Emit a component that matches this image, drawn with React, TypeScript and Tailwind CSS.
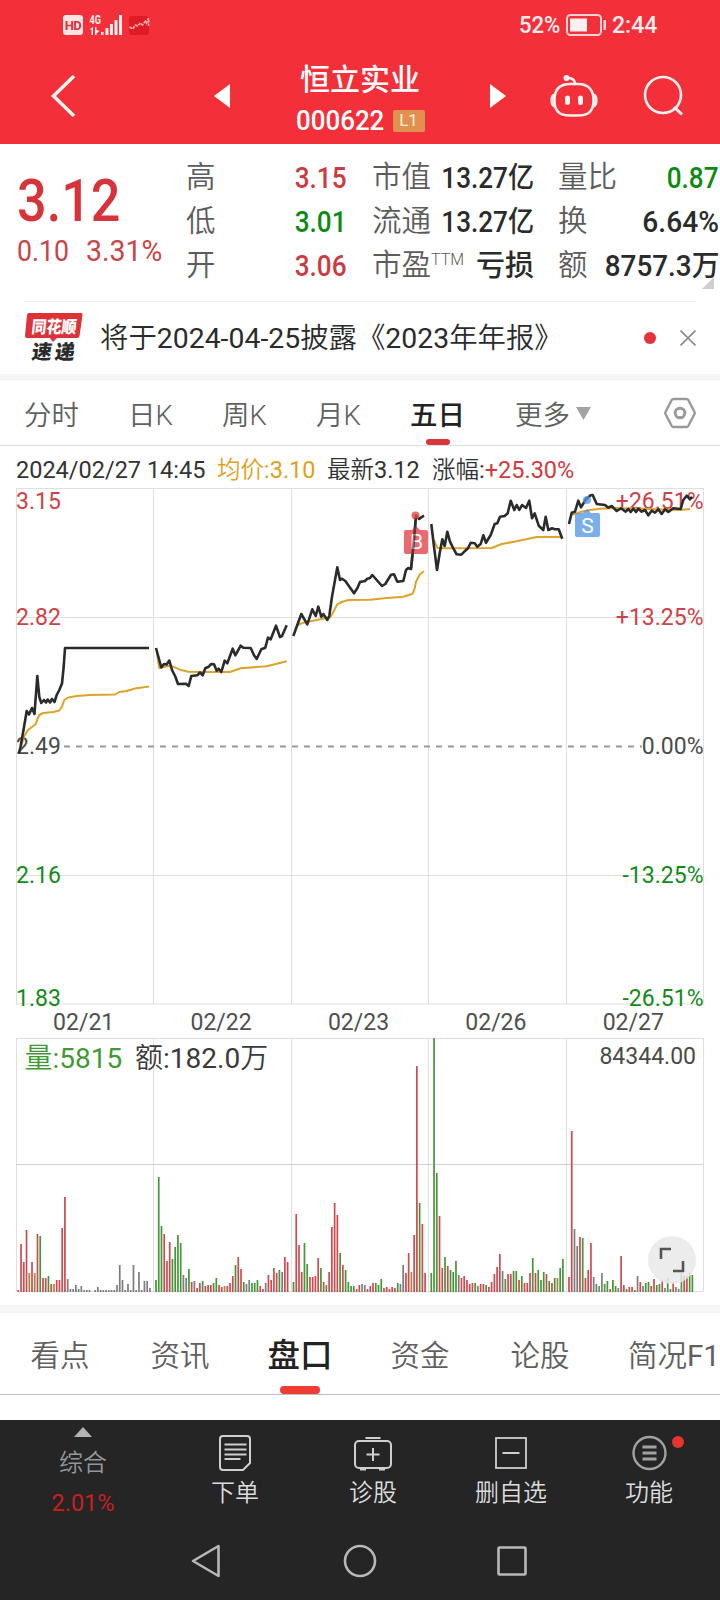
import React from 'react';

type Point = [number, number];

interface DaySeries {
  date: string;
  startX: number;
  price: Point[];
  average: Point[];
  // one entry per bar: colour key followed by the height
  volume: string;
}

const DAYS: DaySeries[] = [
  {
    date: '02/21',
    startX: 18.3,
    price: [
      [19, 265], [20.5, 259], [24, 239], [26.7, 223], [29, 226.5], [32, 220], [34.5, 226], [37.3, 188], [39.3, 209],
      [41.3, 215], [44, 212], [46, 214.5], [47.7, 211.5], [50, 214.5], [52, 211], [54.5, 214], [56.7, 207],
      [59.3, 202], [62, 195.5], [63.7, 178.5], [65, 160], [149, 160],
    ],
    average: [
      [20, 262], [24, 248.5], [28, 242], [35.3, 236.5], [39.3, 227], [43.3, 225], [53.3, 224], [59.3, 222.5],
      [62, 218.5], [64.3, 212], [68.3, 209.5], [76.7, 208], [90, 207], [115, 206.5], [119.3, 204], [126.7, 203],
      [135, 200.5], [149, 198.5],
    ],
    volume:
      'r2 r48 r30 r62 o19 r30 o19 r58 g56 r14 r14 g16 r8 o8 r12 r12 r64 r95 k13 k3 k3 k7 k3 k6 k2 k2 k2 k0 k2 k5 k2 k2 k2 k2 k2 k2 k7 k27 k12 k2 k8 k2 k27 k2 k20 k2 k11 k11 k4',
  },
  {
    date: '02/22',
    startX: 156,
    price: [
      [156, 160], [158.3, 168.5], [161.3, 179.5], [164, 176], [166.7, 176.5], [169.3, 172.5], [172, 182],
      [175.3, 188.5], [178, 196], [186, 195.7], [188.7, 198], [191.3, 188], [197.3, 187.3], [200, 184.5],
      [202.7, 187.3], [205.3, 180.3], [208.7, 178.7], [211.3, 176], [214, 176.3], [216.7, 182.7], [218.7, 180.7],
      [221.3, 184], [224.7, 172.7], [227.3, 175.3], [232.7, 160.7], [235.3, 167.3], [240.7, 157.7], [243.3, 159.7],
      [250.7, 160], [254, 167.3], [256.7, 171], [261.3, 161.3], [265.3, 159.7], [268, 149.7], [270.7, 151.3],
      [276, 137.7], [280, 149], [282, 148], [286.7, 137.3],
    ],
    average: [
      [156.7, 163.7], [159.3, 180], [162, 179.3], [170.7, 177.7], [180, 181.7], [188.3, 183.7], [200, 184],
      [230, 184], [240.7, 180.3], [266.7, 178.3], [286.7, 173.3],
    ],
    volume:
      'g12 g115 g66 r58 r31 r50 g33 g45 g57 g49 k17 k14 g23 r10 k11 r4 r9 g11 r6 r7 r7 g9 g14 r7 r5 o6 r6 r9 r16 g27 r35 r23 g10 k8 k12 g9 g9 g12 r6 r3 k9 r17 r12 r24 r19 g22 k20 r35 r30',
  },
  {
    date: '02/23',
    startX: 293.5,
    price: [
      [293.3, 148], [301.3, 126], [307.3, 136.3], [312.3, 121.3], [315.7, 128], [318.3, 118.7], [321.3, 128.7],
      [323.3, 126], [327.3, 132], [329.3, 128], [332, 108.7], [337.3, 79.3], [340, 92], [342, 90.7], [345.3, 93],
      [354, 105.3], [357.3, 100.3], [360, 94], [365, 93], [367.3, 90.7], [370, 90], [372.3, 87], [382, 98],
      [385.3, 96], [391, 86.7], [394, 86.3], [397.3, 93.7], [403.3, 93], [406, 82], [408.3, 80], [411, 81],
      [413.3, 58.7], [416, 27.7], [419.3, 31], [421.3, 29.3], [424, 27.7],
    ],
    average: [
      [297.3, 137], [303.3, 134.7], [311.7, 133], [325, 130.3], [330, 129.3], [332.7, 125.3], [337.3, 116.3],
      [341.7, 114], [348.3, 112], [370, 111.7], [386.7, 110], [403.3, 108.7], [412.7, 105.7], [414.7, 100.3],
      [416, 93.7], [420, 86.3], [424, 83.3],
    ],
    volume:
      'g10 r78 r47 r20 g49 g28 r15 r15 r16 r34 g24 r10 g7 r20 r65 r89 r77 g39 r27 g22 g10 g6 g6 r3 r7 k8 k7 r3 r6 r9 g9 g7 g13 r4 r5 r3 r5 r4 g9 k8 k27 r19 r39 o20 r57 r226 g89 r68 r19',
  },
  {
    date: '02/26',
    startX: 431.3,
    price: [
      [431.3, 36], [434, 58.7], [437, 82], [439.7, 65.3], [442.3, 51.3], [444.7, 58], [447.3, 43.7], [450, 53.7],
      [453.3, 60.3], [456.7, 66.3], [461.3, 66.7], [465.3, 62.7], [468, 60.3], [470.7, 54.7], [474.7, 55.3],
      [477.3, 58.7], [480.7, 56], [483.3, 47.3], [486, 54.7], [490.7, 47], [494.7, 36], [497.3, 35.3], [500, 28.7],
      [504.7, 28], [507.7, 25.3], [510.7, 12.7], [514.3, 22], [516.7, 17], [519.3, 22], [522, 17], [526, 20],
      [529.3, 12.7], [532, 30.3], [534.7, 25.3], [538.7, 37.7], [543.3, 42], [545.7, 28.7], [548.3, 42], [552, 40.3],
      [554.7, 41.3], [558.7, 41.3], [562.3, 50.7],
    ],
    average: [
      [434, 52], [437.3, 59.7], [443, 60.3], [491.7, 60], [501.7, 56], [516.7, 53.3], [536.7, 49], [561.7, 49],
    ],
    volume:
      'g19 g254 g119 r76 r24 g35 r26 g22 g20 g31 k17 r14 r16 r12 r8 r9 g9 k6 r8 r8 g7 r5 r10 r18 r25 r38 k21 g13 r18 r18 g21 g21 r12 g16 r9 r9 r19 g34 r19 g22 g12 g20 r18 g11 r9 g14 o14 g24 g33',
  },
  {
    date: '02/27',
    startX: 569,
    price: [
      [569, 36], [571.7, 24.7], [575, 23.7], [578.3, 12.7], [581, 19.3], [586, 11.3], [590.7, 7.3], [592.7, 7],
      [596.7, 16], [605, 17], [608.3, 19.7], [611.7, 18], [616.7, 23], [621, 20.3], [625.7, 23.7], [628.3, 21],
      [630.7, 24], [633.3, 20.7], [636, 24], [638.3, 20.7], [641.7, 23.7], [645, 22], [648.3, 27.3], [651.7, 22.7],
      [655, 24.7], [658.3, 21.3], [661.7, 26], [665, 21.3], [668.3, 24], [673.3, 20.3], [680.7, 21], [683.3, 12],
      [686.7, 7.7], [690, 11.3], [692, 8.7],
    ],
    average: [
      [570.7, 27], [576.7, 25.3], [581.7, 23.7], [590, 22], [600, 20.7], [613.3, 20], [643, 20.7], [680, 22],
      [690, 21],
    ],
    volume:
      'r15 r161 k63 k46 r55 g54 r14 r22 r49 k15 g8 k6 k19 g8 g11 r3 g12 g6 k4 r36 r7 g3 r5 r5 g2 k16 r10 k6 g9 g10 r6 r13 g7 g8 r12 k4 g14 g3 r10 k5 k3 g19 r16 r16 g19 g17',
  },
];

const BAR_COLORS: Record<string, string> = {
  r: '#cf4a50',
  g: '#459638',
  k: '#7d7d7d',
  o: '#a8873c',
};

const BAR_STEP = 2.742;
const GRID_X = [153.5, 291.5, 428.5, 566.5];

const toPoints = (points: Point[]) => points.map((p) => p.join(',')).join(' ');

const StatusBar = () => (
  <div className="flex h-12 items-center justify-between pl-[63px] pr-[63px] text-[#ffecec]">
    <div className="flex items-center pt-[2px]">
      <span className="flex h-5 w-5 items-center justify-center rounded-[3px] bg-[#ffe4e4] text-[#dd2f39]">
        <span className="text-[13px] font-bold leading-none tracking-[-0.5px]">HD</span>
      </span>
      <svg width="34" height="22" viewBox="0 0 34 22" className="ml-[6px]" fill="currentColor">
        <text x="0.5" y="9.5" fontSize="12" fontWeight="700" textLength="11.5" lengthAdjust="spacingAndGlyphs">4G</text>
        <path d="M1 15l3-2v8H2.500v-5.500H1zM6 13h1.500v3l3 1-3 2.500V21H6z" />
        <rect x="12" y="18" width="2.500" height="3" />
        <rect x="16.500" y="14" width="3" height="7" />
        <rect x="21" y="10" width="3" height="11" />
        <rect x="25.500" y="6" width="3" height="15" />
        <rect x="30" y="1" width="3" height="20" />
      </svg>
      <svg width="21" height="21" viewBox="0 0 21 21" className="ml-[6px]">
        <rect y="1" width="20" height="19" rx="3" fill="#e01a26" />
        <path
          d="M0.500 12l3 2 3-4 2 1 3-3 2 2 3-4 1 2 2-5v8"
          fill="none"
          stroke="#ffb9b4"
          strokeWidth="1.600"
          strokeDasharray="3 1"
        />
      </svg>
    </div>
    <div className="flex items-center pt-[2px] text-[24px] font-medium leading-none">
      <span className="w-[43px] origin-left scale-x-[.92]">52%</span>
      <svg width="42" height="22" viewBox="0 0 42 22" className="ml-[4px] mr-[4px]">
        <rect x="1" y="1" width="34" height="20" rx="3.500" fill="none" stroke="#ffd3d5" strokeWidth="2" />
        <rect x="4" y="4.500" width="17" height="13" fill="#fff0f0" />
        <rect x="37.500" y="6" width="2.500" height="10" fill="#ffd3d5" />
      </svg>
      <span className="w-[45px] origin-left scale-x-[.96]">2:44</span>
    </div>
  </div>
);

const TitleBar = () => (
  <div className="flex h-24 items-center text-white">
    <svg width="26" height="44" viewBox="0 0 26 44" className="ml-[50px] shrink-0" fill="none" stroke="#fff3f0" strokeWidth="3.500">
      <path d="M24 2L3.500 22 24 42" />
    </svg>
    <svg width="16" height="24" viewBox="0 0 16 24" className="ml-[138px] shrink-0">
      <path d="M0 12L16 0v24z" fill="#fff" />
    </svg>
    <div className="ml-[58px] flex w-[144px] shrink-0 flex-col items-center pt-[8px]">
      <h1 className="text-[30px] font-medium leading-[38px]">恒立实业</h1>
      <div className="mt-[3px] flex items-center">
        <span className="w-[89px] origin-left scale-x-[.925] whitespace-nowrap text-[28px] font-medium leading-[38px]">
          000622
        </span>
        <span className="ml-[8px] flex h-[22px] w-8 items-center justify-center rounded-[2px] bg-[#e0914f] text-[17px] leading-none text-[#fff0dc]">
          L1
        </span>
      </div>
    </div>
    <svg width="16" height="24" viewBox="0 0 16 24" className="ml-[58px] shrink-0">
      <path d="M16 12L0 0v24z" fill="#fff" />
    </svg>
    <svg width="48" height="44" viewBox="0 0 48 44" className="ml-[44px] shrink-0" fill="none" stroke="#fff1ef" strokeWidth="2.600">
      <path d="M20 10h8c10 0 15.500 5.500 15.500 16 0 11-4.500 15.500-15.500 15.500h-8C9 41.500 4.500 37 4.500 26 4.500 15.500 10 10 20 10z" />
      <path d="M4.500 21c-3.500 1-3.500 10 0 11M43.500 21c3.500 1 3.500 10 0 11" strokeWidth="3" />
      <path d="M25 10c0-4-2-5.500-6-6" strokeLinecap="round" />
      <circle cx="16.500" cy="4" r="3" fill="#fff1ef" stroke="none" />
      <path d="M17.500 24v4.500M30.500 24v4.500" strokeWidth="5" strokeLinecap="round" />
    </svg>
    <svg width="42" height="42" viewBox="0 0 42 42" className="ml-[45px] shrink-0" fill="none" stroke="#fff1ef" strokeWidth="2.600">
      <circle cx="20" cy="20" r="18" />
      <path d="M31 32l8 7.500" strokeWidth="3" />
    </svg>
  </div>
);

interface QuoteCellProps {
  label: React.ReactNode;
  value: string;
  color?: string;
  scale?: string;
}

const QuoteCell: React.FC<QuoteCellProps> = ({ label, value, color = 'text-[#2b2b2b]', scale = 'scale-x-[.9]' }) => (
  <div className="flex h-11 items-center justify-between whitespace-nowrap">
    <span className="text-[29.500px] font-[350] leading-none text-[#5c5c5c]">{label}</span>
    <span className={`w-0 text-[29px] font-medium leading-none ${color}`}>
      <span className={`float-right origin-right ${scale}`}>{value}</span>
    </span>
  </div>
);

const QuotePanel = () => (
  <section className="flex h-[157px] pt-[12px]">
    <div className="w-[186px] shrink-0 pl-[17px] text-[#d6343a]">
      <div className="mt-[13px] w-0 origin-left scale-x-[.87] text-[60px] font-medium leading-[64px]">3.12</div>
      <div className="-mt-[1px] flex text-[29px] leading-[38px] text-[#c94449]">
        <span className="w-[69px] origin-left scale-x-[.92]">0.10</span>
        <span className="w-0 origin-left scale-x-[.98]">3.31%</span>
      </div>
    </div>
    <div className="w-[161px] shrink-0">
      <QuoteCell label="高" value="3.15" color="text-[#cc3b42]" />
      <QuoteCell label="低" value="3.01" color="text-[#0c8a12]" />
      <QuoteCell label="开" value="3.06" color="text-[#cc3b42]" />
    </div>
    <div className="ml-[25px] w-[162px] shrink-0">
      <QuoteCell label="市值" value="13.27亿" />
      <QuoteCell label="流通" value="13.27亿" />
      <QuoteCell
        label={
          <>
            市盈<sup className="relative -top-[10px] text-[16px] font-[350] leading-none">TTM</sup>
          </>
        }
        value="亏损"
        scale="scale-x-100"
      />
    </div>
    <div className="relative ml-[24px] w-[161px] shrink-0">
      <QuoteCell label="量比" value="0.87" color="text-[#0c8a12]" />
      <QuoteCell label="换" value="6.64%" scale="scale-x-[.97]" />
      <QuoteCell label="额" value="8757.3万" scale="scale-x-[.96]" />
      <svg width="12" height="12" viewBox="0 0 12 12" className="absolute bottom-[12px] right-[5px]">
        <path d="M12 0v12H0z" fill="#cfcfcf" />
      </svg>
    </div>
  </section>
);

const NoticeBar = () => (
  <section className="mx-6 flex h-[73px] items-center border-t border-[#ececec]">
    <svg width="59" height="52" viewBox="0 0 59 52" className="shrink-0 overflow-visible">
      <path d="M5 1h52q2 0 1.500 2l-3 21q-.5 2-2.500 2H33l-4 4-3-4H3q-2 0-2-2L3 3q.3-2 2-2z" fill="#dc3238" />
      <text x="0" y="0" transform="translate(7 20.500) skewX(-6)" fontSize="17" fontWeight="900" fill="#fff" textLength="45" lengthAdjust="spacingAndGlyphs">
        同花顺
      </text>
      <text x="0" y="0" transform="translate(7 47) skewX(-8)" fontSize="20" fontWeight="900" fill="#2a2a2a" textLength="43">
        速递
      </text>
    </svg>
    <p className="ml-[17px] grow whitespace-nowrap pt-[2px] text-[28.400px] font-[350] leading-none text-[#2b2b2b]">
      将于<span className="font-normal">2024-04-25</span>披露《<span className="font-normal">2023</span>年年报》
    </p>
    <span className="mr-6 h-3 w-3 rounded-full bg-[#e8323a]" />
    <svg width="16" height="16" viewBox="0 0 16 16" fill="none" stroke="#8a8a8a" strokeWidth="1.600">
      <path d="M.5.5l15 15M15.500.5l-15 15" />
    </svg>
  </section>
);

const PERIODS = ['分时', '日K', '周K', '月K', '五日'];

const PeriodTabs = () => (
  <nav className="flex h-[65px] items-center justify-between border-b border-[#dedede] pl-[24px] pr-6 text-[27.500px] font-[350] leading-none text-[#606060]">
    <div className="flex h-full items-center gap-[50px]">
      {PERIODS.map((period) =>
        period === '五日' ? (
          <div key={period} className="relative flex h-full items-center pt-[5px] font-medium text-[#222]">
            {period}
            <span className="absolute bottom-0 left-1/2 h-[6px] w-6 -translate-x-1/2 rounded-full bg-[#d9363c]" />
          </div>
        ) : (
          <div key={period} className="w-[44px] whitespace-nowrap pt-[5px] first:w-[54px]">{period}</div>
        )
      )}
      <div className="flex items-center gap-[6px] whitespace-nowrap pt-[5px]">
        更多
        <svg width="15" height="13" viewBox="0 0 15 13" className="mb-[4px]">
          <path d="M0 0h15L7.500 13z" fill="#a3a3a3" />
        </svg>
      </div>
    </div>
    <svg width="32" height="32" viewBox="0 0 32 32" fill="none" stroke="#999" strokeWidth="2.400">
      <path d="M9.500 2h13q1.200 0 1.800 1L30.500 15q.5 1 0 2L24.300 29q-.6 1-1.800 1h-13q-1.200 0-1.800-1L1.500 17q-.5-1 0-2L7.700 3q.6-1 1.800-1z" />
      <circle cx="16" cy="16" r="4.800" strokeWidth="3" />
    </svg>
  </nav>
);

const PriceInfo = () => (
  <div className="flex h-[42px] items-center whitespace-nowrap pl-4 pt-[7px] text-[23.500px] leading-none text-[#333]">
    <span className="w-[201px]">2024/02/27 14:45</span>
    <span className="w-[110px] text-[#dda21c]">
      <span className="font-[350]">均价</span>:3.10
    </span>
    <span className="w-[105px]">
      <span className="font-[350]">最新</span>3.12
    </span>
    <span>
      <span className="font-[350]">涨幅</span>:<span className="text-[#d23a40]">+25.30%</span>
    </span>
  </div>
);

const PRICE_LABELS = [
  { y: 20.5, price: '3.15', percent: '+26.51%', color: '#cf4047' },
  { y: 137, price: '2.82', percent: '+13.25%', color: '#cf4047' },
  { y: 266, price: '2.49', percent: '0.00%', color: '#4b4b4b' },
  { y: 395, price: '2.16', percent: '-13.25%', color: '#148a1b' },
  { y: 517.5, price: '1.83', percent: '-26.51%', color: '#148a1b' },
];

const PriceChart = () => (
  <svg width="720" height="516" viewBox="0 0 720 516" className="block overflow-visible">
    <g stroke="#dfdfdf" strokeWidth="1" fill="none">
      <rect x="16.500" y="0.500" width="687" height="515.500" />
      {GRID_X.map((x) => (
        <line key={x} x1={x} y1="0" x2={x} y2="516" />
      ))}
      <line x1="16" y1="129.500" x2="703" y2="129.500" />
      <line x1="16" y1="387.500" x2="703" y2="387.500" />
    </g>
    <line x1="64" y1="258.500" x2="642" y2="258.500" stroke="#999" strokeWidth="1.800" strokeDasharray="6 6" />
    <g fontSize="23">
      {PRICE_LABELS.map((label) => (
        <g key={label.price} fill={label.color}>
          <text x="16" y={label.y}>{label.price}</text>
          <text x="703.500" y={label.y} textAnchor="end">{label.percent}</text>
        </g>
      ))}
    </g>
    {DAYS.map((day) => (
      <g key={day.date} fill="none" strokeLinejoin="round">
        <polyline points={toPoints(day.average)} stroke="#dda32b" strokeWidth="2" />
        <polyline points={toPoints(day.price)} stroke="#2b2b2b" strokeWidth="2.600" />
      </g>
    ))}
    {/* buy marker */}
    <g fill="#e5484f" fillOpacity="0.82">
      <circle cx="415.500" cy="27.500" r="4" />
      <path d="M406 42h6l4-4 4 4h6q2 0 2 2v20q0 2-2 2h-20q-2 0-2-2V44q0-2 2-2z" />
    </g>
    <text x="416.500" y="61" textAnchor="middle" fontSize="21" fill="#fff">B</text>
    <path d="M411.200 80l2.100-21.300L416 30" fill="none" stroke="#2b2b2b" strokeOpacity="0.6" strokeWidth="2.600" />
    {/* sell marker */}
    <g fill="#4f94e4" fillOpacity="0.75">
      <circle cx="587" cy="12" r="4" />
      <path d="M577 25h6l4-4 4 4h7q2 0 2 2v20q0 2-2 2h-21q-2 0-2-2V27q0-2 2-2z" />
    </g>
    <text x="587.500" y="44.500" textAnchor="middle" fontSize="21" fill="#fff">S</text>
  </svg>
);

const VolumeChart = () => (
  <div className="relative">
    <svg width="720" height="254" viewBox="0 0 720 254" className="block">
      <g stroke="#dfdfdf" strokeWidth="1" fill="none">
        <rect x="16.500" y="0.500" width="687" height="253" />
        {GRID_X.map((x) => (
          <line key={x} x1={x} y1="0" x2={x} y2="254" />
        ))}
        <line x1="16" y1="126.500" x2="703" y2="126.500" stroke="#d2d2d2" />
      </g>
      {DAYS.map((day) =>
        day.volume.split(' ').map((bar, i) => {
          const height = Number(bar.slice(1));
          return (
            <rect
              key={`${day.date}-${i}`}
              x={day.startX + i * BAR_STEP - 0.85}
              y={254 - height}
              width="1.700"
              height={height}
              fill={BAR_COLORS[bar[0]]}
            />
          );
        })
      )}
      <text x="24.500" y="30" fontSize="28" fill="#3f9a35">
        <tspan fontWeight="350">量</tspan>:5815
      </text>
      <text x="135" y="30" fontSize="28" fill="#3a3a3a">
        <tspan fontWeight="350">额</tspan>:182.0<tspan fontWeight="350">万</tspan>
      </text>
      <text x="696" y="26" fontSize="23" textAnchor="end" fill="#4a4a4a">84344.00</text>
    </svg>
    <button className="absolute bottom-[8px] right-[24px] flex h-12 w-12 items-center justify-center rounded-full bg-[#e9e9e9]/85">
      <svg width="26" height="26" viewBox="0 0 26 26" fill="none" stroke="#555" strokeWidth="2.600">
        <path d="M2 12V2h10M24 14v10H14" />
      </svg>
    </button>
  </div>
);

const DETAIL_TABS = ['看点', '资讯', '盘口', '资金', '论股'];

const DetailTabs = () => (
  <nav className="flex h-[82px] overflow-hidden whitespace-nowrap border-b border-[#bdbdbd] text-[29.500px] font-[350] leading-none text-[#606060]">
    {DETAIL_TABS.map((tab) =>
      tab === '盘口' ? (
        <div key={tab} className="relative flex w-[120px] shrink-0 items-center justify-center pt-[5px] text-[32.500px] font-medium text-[#222]">
          {tab}
          <span className="absolute bottom-0 left-10 h-2 w-10 rounded-full bg-[#f03a34]" />
        </div>
      ) : (
        <div key={tab} className="flex w-[120px] shrink-0 items-center justify-center pt-[6px]">{tab}</div>
      )
    )}
    <div className="flex shrink-0 items-center pl-[28px] pt-[6px]">
      简况<span className="font-normal">F1</span>
    </div>
  </nav>
);

interface ActionProps {
  label: string;
  children: React.ReactNode;
}

const Action: React.FC<ActionProps> = ({ label, children }) => (
  <div className="flex w-[138px] flex-col items-center pt-[14px]">
    {children}
    <span className="mt-[7px] text-[24px] font-[350] leading-[28px] text-[#dcdcdc]">{label}</span>
  </div>
);

const ActionBar = () => (
  <div className="flex h-[102px]">
    <div className="flex w-[166px] flex-col items-center pt-[7px]">
      <svg width="18" height="10" viewBox="0 0 18 10">
        <path d="M9 0l9 10H0z" fill="#b4b4b4" />
      </svg>
      <span className="mt-[12px] text-[24px] font-[350] leading-[28px] text-[#92989a]">综合</span>
      <span className="mt-[12px] text-[23.500px] leading-[28px] text-[#c91f20]">2.01%</span>
    </div>
    <Action label="下单">
      <svg width="34" height="38" viewBox="0 0 34 38" fill="none" stroke="#cfcfcf" strokeWidth="2">
        <path d="M5 2h24q3 0 3 3v24l-7 7H5q-3 0-3-3V5q0-3 3-3z" />
        <path d="M6.500 10.500h22M6.500 15.500h22M6.500 20.500h22M6.500 25h16" strokeWidth="1.800" />
      </svg>
    </Action>
    <Action label="诊股">
      <svg width="40" height="38" viewBox="0 0 40 38" fill="none" stroke="#cfcfcf" strokeWidth="2">
        <rect x="2" y="7" width="36" height="27" rx="4" />
        <path d="M12.500 4h15M20 14v13M13.500 20.500h13M7 35.500h6M26 35.500h6" />
      </svg>
    </Action>
    <Action label="删自选">
      <svg width="34" height="38" viewBox="0 0 34 38" fill="none" stroke="#cfcfcf" strokeWidth="1.800">
        <rect x="2" y="4" width="30" height="30" />
        <path d="M8.500 19h17" strokeWidth="2" />
      </svg>
    </Action>
    <Action label="功能">
      <div className="relative">
        <svg width="36" height="38" viewBox="0 0 36 38" fill="none" stroke="#a2a2a2" strokeWidth="2.400">
          <circle cx="18.500" cy="19" r="16" />
          <path d="M11.500 13h14M11.500 19h14M11.500 25h14" strokeWidth="2.800" />
        </svg>
        <span className="absolute -right-[17px] top-[2px] h-3 w-3 rounded-full bg-[#ea3330]" />
      </div>
    </Action>
  </div>
);

const SystemNav = () => (
  <div className="flex h-[78px] items-center pl-[190px]">
    <svg width="32" height="36" viewBox="0 0 32 36" fill="none" stroke="#b8b8b8" strokeWidth="2.600" strokeLinejoin="round">
      <path d="M28.500 3v30L3 18z" />
    </svg>
    <svg width="36" height="36" viewBox="0 0 36 36" className="ml-[120px]" fill="none" stroke="#b8b8b8" strokeWidth="2.600">
      <circle cx="18" cy="18" r="15" />
    </svg>
    <svg width="32" height="32" viewBox="0 0 32 32" className="ml-[118px]" fill="none" stroke="#b8b8b8" strokeWidth="2.600">
      <rect x="2.500" y="2.500" width="27" height="27" rx="1" />
    </svg>
  </div>
);

export default function App() {
  return (
    <div className="flex h-[1600px] w-[720px] flex-col overflow-hidden bg-white font-['Roboto','Noto_Sans_CJK_SC',sans-serif]">
      <header className="h-36 bg-[#f32f39]">
        <StatusBar />
        <TitleBar />
      </header>
      <QuotePanel />
      <NoticeBar />
      <div className="h-[7px] bg-[#f5f5f5]" />
      <PeriodTabs />
      <PriceInfo />
      <PriceChart />
      <div className="grid h-[34px] grid-cols-5 items-center pl-[15px] pr-[18px] pt-[3px] text-center text-[23px] leading-none text-[#4f4f4f]">
        {DAYS.map((day) => (
          <span key={day.date}>{day.date}</span>
        ))}
      </div>
      <VolumeChart />
      <div className="mt-[13px] h-2 bg-[#f6f6f6]" />
      <DetailTabs />
      <footer className="mt-auto h-[180px] bg-[#252525]">
        <ActionBar />
        <SystemNav />
      </footer>
    </div>
  );
}
